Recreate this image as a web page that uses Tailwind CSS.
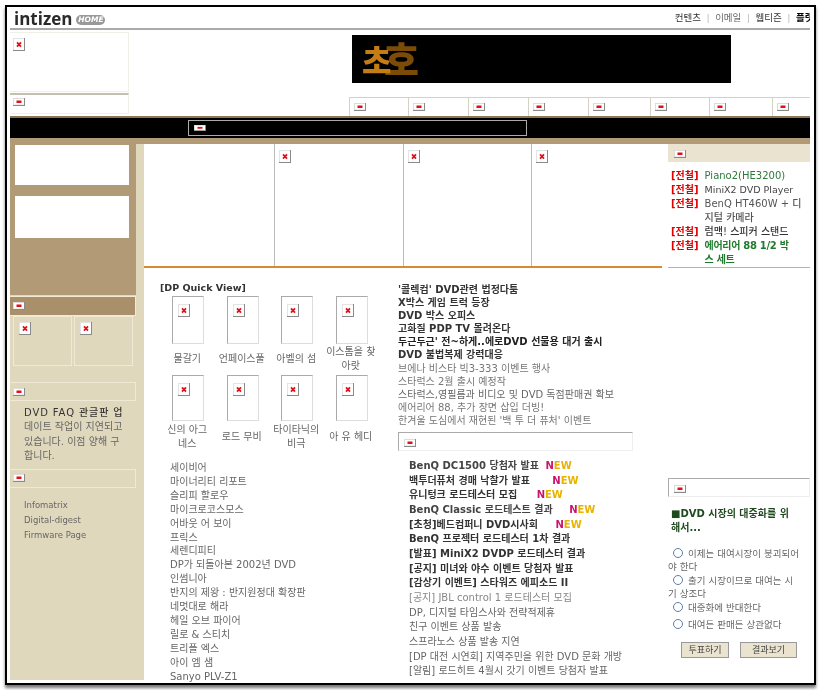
<!DOCTYPE html>
<html lang="ko">
<head>
  <meta charset="UTF-8">
  <title>intizen DP</title>
  <script src="https://cdn.jsdelivr.net/npm/@tailwindcss/browser@4"></script>
</head>
<body class="bg-white">
  <!-- broken image marks -->
  <svg class="hidden">
    <symbol id="broken" viewBox="0 0 12 12" preserveAspectRatio="none">
      <rect x="0" y="0" width="12" height="12" fill="#8a8a8a"/>
      <rect x="0" y="0" width="11" height="11" fill="#e4e4e4"/>
      <rect x="1" y="1" width="10" height="10" fill="#fff"/>
      <path d="M4 4l4 4M8 4l-4 4" stroke="#e0101a" stroke-width="1.8"/>
    </symbol>
    <symbol id="flat" viewBox="0 0 12 8" preserveAspectRatio="none">
      <rect x="0" y="0" width="12" height="8" fill="#8a8a8a"/>
      <rect x="0" y="0" width="11" height="7" fill="#dcdcdc"/>
      <rect x="1" y="1" width="10" height="5.5" fill="#fff"/>
      <rect x="3.5" y="2.5" width="5" height="2.5" fill="#e0101a"/>
    </symbol>
  </svg>

  <div class="w-[820px] h-[690px] pt-[5px] pl-[5px] overflow-hidden font-['DejaVu_Sans','Noto_Sans_CJK_KR',sans-serif] text-[10px] text-[#555] blur-[0.35px]">
    <div class="w-[811px] h-[680px] border-2 border-black p-[3px] pb-0 pr-[4px] overflow-hidden shadow-[0_3px_3px_#777]">

      <!-- Top bar -->
      <header class="flex justify-between items-start h-[18px] border-b-2 border-[#aaa] box-content">
        <div class="flex items-center pl-1 -mt-[2px]">
          <span class="font-['Open_Sans',sans-serif] font-bold text-[17px] leading-[22px] text-[#2a2a2a]">intizen</span>
          <span class="ml-[4px] mt-[2px] w-[29px] h-[10px] rounded-full bg-[#999] text-white italic font-bold text-[7.5px] leading-[10px] text-center">HOME</span>
        </div>
        <nav class="flex items-center gap-[5.5px] pt-[2px] text-[9.5px] leading-[12px] text-[#333] whitespace-nowrap">
          <a>컨텐츠</a><span class="text-[#bbb]">|</span><a class="text-[#666]">이메일</a><span class="text-[#bbb]">|</span><a>웹티즌</a><span class="text-[#bbb]">|</span><a class="font-bold text-black w-[14px] overflow-hidden">플랫</a>
        </nav>
      </header>

      <!-- Banner area -->
      <div class="flex h-[86px] pt-[2px]">
        <div class="w-[119px] shrink-0">
          <div class="h-[60px] border border-[#f1f0e6] border-l-0 pl-[3px] pt-[5px]"><svg class="w-[12px] h-[13px]"><use href="#broken"/></svg></div>
          <div class="h-[21px] mt-[1px] border-t-2 border-[#c4c0b0] border-r border-r-[#f1f0e6] border-b border-b-[#f1f0e6] pl-[3px] pt-[3px]"><svg class="w-[12px] h-[8px] block"><use href="#flat"/></svg></div>
        </div>
        <div class="flex-1 pl-[223px]">
          <div class="relative mt-[3px] w-[379px] h-[48px] bg-black">
            <span class="absolute left-[32px] top-[-1px] font-['Noto_Sans_CJK_KR',sans-serif] font-black text-[38px] leading-[48px] text-[#7a4c08]">호</span>
            <span class="absolute left-[10px] top-[5px] font-['Noto_Sans_CJK_KR',sans-serif] font-black text-[32px] leading-[38px] text-[#c47c14]">초</span>
          </div>
          <div class="mt-[14px] flex h-[19px] -ml-[3px]">
            <div class="w-[60px] border border-[#d5d2c4] border-b-0 pl-[4px] pt-[5px]"><svg class="w-[12px] h-[8px] block"><use href="#flat"/></svg></div>
            <div class="w-[60px] border border-[#d5d2c4] border-b-0 border-l-0 pl-[4px] pt-[5px]"><svg class="w-[12px] h-[8px] block"><use href="#flat"/></svg></div>
            <div class="w-[60px] border border-[#d5d2c4] border-b-0 border-l-0 pl-[4px] pt-[5px]"><svg class="w-[12px] h-[8px] block"><use href="#flat"/></svg></div>
            <div class="w-[60px] border border-[#d5d2c4] border-b-0 border-l-0 pl-[4px] pt-[5px]"><svg class="w-[12px] h-[8px] block"><use href="#flat"/></svg></div>
            <div class="w-[62px] border border-[#d5d2c4] border-b-0 border-l-0 pl-[4px] pt-[5px]"><svg class="w-[12px] h-[8px] block"><use href="#flat"/></svg></div>
            <div class="w-[59px] border border-[#d5d2c4] border-b-0 border-l-0 pl-[4px] pt-[5px]"><svg class="w-[12px] h-[8px] block"><use href="#flat"/></svg></div>
            <div class="w-[63px] border border-[#d5d2c4] border-b-0 border-l-0 pl-[4px] pt-[5px]"><svg class="w-[12px] h-[8px] block"><use href="#flat"/></svg></div>
            <div class="w-[37px] border-t border-[#d5d2c4] pl-[4px] pt-[5px]"><svg class="w-[12px] h-[8px] block"><use href="#flat"/></svg></div>
          </div>
        </div>
      </div>

      <!-- Black menu bar -->
      <div class="h-[22px] border-t-2 border-[#8c7657] bg-black pt-[2px] pl-[178px]">
        <div class="w-[339px] h-[16px] border border-[#aaa] pl-[5px] pt-[4px]"><svg class="w-[12px] h-[6px] block"><use href="#flat"/></svg></div>
      </div>
      <div class="h-[6px] bg-[#b39a76]"></div>

      <!-- Three columns -->
      <div class="flex h-[536px]">

        <!-- Left column -->
        <aside class="w-[134px] shrink-0 bg-[#e0d8bd]">
          <div class="w-[126px] h-[151px] bg-[#b39a76] pl-[5px] pt-[1px]">
            <div class="w-[114px] h-[40px] bg-white"></div>
            <div class="w-[114px] h-[42px] mt-[11px] bg-white"></div>
          </div>
          <div class="w-[126px] h-[20px] mt-[1px] bg-[#a98f6a] border border-[#efe9d6] border-l-0 pl-[3px] pt-[5px]"><svg class="w-[12px] h-[8px] block"><use href="#flat"/></svg></div>
          <div class="flex gap-[2px] pl-[3px]">
            <div class="w-[59px] h-[50px] border border-[#efe9d6] pl-[5px] pt-[5px]"><svg class="w-[12px] h-[13px] block"><use href="#broken"/></svg></div>
            <div class="w-[59px] h-[50px] border border-[#efe9d6] pl-[5px] pt-[5px]"><svg class="w-[12px] h-[13px] block"><use href="#broken"/></svg></div>
          </div>
          <div class="w-[126px] h-[19px] mt-[16px] border border-[#efe9d6] border-l-0 pl-[3px] pt-[5px]"><svg class="w-[12px] h-[8px] block"><use href="#flat"/></svg></div>
          <p class="ml-[14px] mt-[5px] leading-[14.4px] text-[#666] whitespace-nowrap"><b class="text-[#333] tracking-[0.9px] font-medium">DVD FAQ 관글판 업</b><br>데이트 작업이 지연되고<br>있습니다. 이점 양해 구<br>합니다.</p>
          <div class="w-[126px] h-[19px] mt-[5px] border border-[#efe9d6] border-l-0 pl-[3px] pt-[4px]"><svg class="w-[12px] h-[8px] block"><use href="#flat"/></svg></div>
          <ul class="pl-[14px] mt-[10px] text-[8.5px] text-[#666]">
            <li class="leading-[15px]">Infomatrix</li>
            <li class="leading-[15px]">Digital-digest</li>
            <li class="leading-[15px]">Firmware Page</li>
          </ul>
        </aside>

        <!-- Center column -->
        <main class="w-[518px] shrink-0 bg-white">
          <div class="flex h-[124px] border-b-2 border-[#d98a2e]">
            <div class="w-[131px] border-r border-[#bbb]"></div>
            <div class="w-[129px] border-r border-[#bbb] pl-[4px] pt-[6px]"><svg class="w-[12px] h-[13px] block"><use href="#broken"/></svg></div>
            <div class="w-[128px] border-r border-[#bbb] pl-[4px] pt-[6px]"><svg class="w-[12px] h-[13px] block"><use href="#broken"/></svg></div>
            <div class="flex-1 pl-[4px] pt-[6px]"><svg class="w-[12px] h-[13px] block"><use href="#broken"/></svg></div>
          </div>

          <div class="flex pt-[13px]">
            <!-- Quick view -->
            <section class="w-[254px] shrink-0 pl-[16px]">
              <h2 class="font-bold text-[#333] text-[9.5px] leading-[13px]">[DP Quick View]</h2>
              <div class="grid grid-cols-[repeat(4,54.5px)] w-[218px] text-center text-[#666] leading-[14px] mt-[2px]">
                <div class="h-[79px]"><div class="w-[32px] h-[48px] ml-[12px] border border-[#ddd] border-t-[#aaa] border-l-[#aaa] pl-[5px] pt-[7px]"><svg class="w-[12px] h-[13px] block"><use href="#broken"/></svg></div><p class="h-[30px] flex items-center justify-center break-keep">물갈기</p></div>
                <div class="h-[79px]"><div class="w-[32px] h-[48px] ml-[12px] border border-[#ddd] border-t-[#aaa] border-l-[#aaa] pl-[5px] pt-[7px]"><svg class="w-[12px] h-[13px] block"><use href="#broken"/></svg></div><p class="h-[30px] flex items-center justify-center break-keep">언페이스풀</p></div>
                <div class="h-[79px]"><div class="w-[32px] h-[48px] ml-[12px] border border-[#ddd] border-t-[#aaa] border-l-[#aaa] pl-[5px] pt-[7px]"><svg class="w-[12px] h-[13px] block"><use href="#broken"/></svg></div><p class="h-[30px] flex items-center justify-center break-keep">아벨의 섬</p></div>
                <div class="h-[79px]"><div class="w-[32px] h-[48px] ml-[12px] border border-[#ddd] border-t-[#aaa] border-l-[#aaa] pl-[5px] pt-[7px]"><svg class="w-[12px] h-[13px] block"><use href="#broken"/></svg></div><p class="h-[30px] flex items-center justify-center">이스톰을 찾<br>아랏</p></div>
                <div class="h-[78px]"><div class="w-[32px] h-[46px] ml-[12px] border border-[#ddd] border-t-[#aaa] border-l-[#aaa] pl-[5px] pt-[7px]"><svg class="w-[12px] h-[13px] block"><use href="#broken"/></svg></div><p class="h-[32px] flex items-center justify-center">신의 아그<br>네스</p></div>
                <div class="h-[78px]"><div class="w-[32px] h-[46px] ml-[12px] border border-[#ddd] border-t-[#aaa] border-l-[#aaa] pl-[5px] pt-[7px]"><svg class="w-[12px] h-[13px] block"><use href="#broken"/></svg></div><p class="h-[32px] flex items-center justify-center">로드 무비</p></div>
                <div class="h-[78px]"><div class="w-[32px] h-[46px] ml-[12px] border border-[#ddd] border-t-[#aaa] border-l-[#aaa] pl-[5px] pt-[7px]"><svg class="w-[12px] h-[13px] block"><use href="#broken"/></svg></div><p class="h-[32px] flex items-center justify-center">타이타닉의<br>비극</p></div>
                <div class="h-[78px]"><div class="w-[32px] h-[46px] ml-[12px] border border-[#ddd] border-t-[#aaa] border-l-[#aaa] pl-[5px] pt-[7px]"><svg class="w-[12px] h-[13px] block"><use href="#broken"/></svg></div><p class="h-[32px] flex items-center justify-center">아 유 헤디</p></div>
              </div>
              <ul class="pl-[10px] mt-[8px] leading-[13.9px] text-[#666] whitespace-nowrap">
                <li>세이비어</li>
                <li>마이너리티 리포트</li>
                <li>슬리피 할로우</li>
                <li>마이크로코스모스</li>
                <li>어바웃 어 보이</li>
                <li>프릭스</li>
                <li>세렌디피티</li>
                <li>DP가 되돌아본 2002년 DVD</li>
                <li>인썸니아</li>
                <li>반지의 제왕 : 반지원정대 확장판</li>
                <li>네멋대로 해라</li>
                <li>헤일 오브 파이어</li>
                <li>릴로 &amp; 스티치</li>
                <li>트리플 엑스</li>
                <li>아이 엠 샘</li>
                <li>Sanyo PLV-Z1</li>
              </ul>
            </section>

            <!-- News -->
            <section class="flex-1 whitespace-nowrap">
              <ul class="leading-[13.1px] pt-[2px]">
                <li class="font-bold text-[#333]">'콜렉컴' DVD관련 법정다툼</li>
                <li class="font-bold text-[#333]">X박스 게임 트럭 등장</li>
                <li class="font-bold text-[#333]">DVD 박스 오피스</li>
                <li class="font-bold text-[#333]">고화질 PDP TV 몰려온다</li>
                <li class="font-bold text-[#222]">두근두근' 전~하게..에로DVD 선물용 대거 출시</li>
                <li class="font-bold text-[#333]">DVD 불법복제 강력대응</li>
                <li class="text-[#777]">브에나 비스타 빅3-333 이벤트 행사</li>
                <li class="text-[#777]">스타럭스 2월 출시 예정작</li>
                <li class="text-[#666]">스타럭스,영필름과 비디오 및 DVD 독점판매권 확보</li>
                <li class="text-[#777]">에어리어 88, 추가 장면 삽입 더빙!</li>
                <li class="text-[#777]">한겨울 도심에서 재현된 '백 투 더 퓨처' 이벤트</li>
              </ul>
              <div class="w-[235px] h-[19px] mt-[5px] border border-[#eee] border-t-[#aaa] border-l-[#aaa] pl-[5px] pt-[6px]"><svg class="w-[12px] h-[8px] block"><use href="#flat"/></svg></div>
              <ul class="pl-[11px] mt-[8px] leading-[14.65px]">
                <li class="font-bold text-[#444]">BenQ DC1500 당첨자 발표 <span class="ml-[3px] font-black"><span class="text-[#c8146e]">N</span><span class="text-[#e8b400]">EW</span></span></li>
                <li class="font-bold text-[#333]">백투더퓨처 경매 낙찰가 발표 <span class="ml-[19px] font-black"><span class="text-[#c8146e]">N</span><span class="text-[#e8b400]">EW</span></span></li>
                <li class="font-bold text-[#333]">유니텅크 로드테스터 모집 <span class="ml-[16px] font-black"><span class="text-[#c8146e]">N</span><span class="text-[#e8b400]">EW</span></span></li>
                <li class="font-bold text-[#444]">BenQ Classic 로드테스트 결과 <span class="ml-[13px] font-black"><span class="text-[#c8146e]">N</span><span class="text-[#e8b400]">EW</span></span></li>
                <li class="font-bold text-[#333]">[초청]베드컴퍼니 DVD시사회 <span class="ml-[14px] font-black"><span class="text-[#c8146e]">N</span><span class="text-[#e8b400]">EW</span></span></li>
                <li class="font-bold text-[#333]">BenQ 프로젝터 로드테스터 1차 결과</li>
                <li class="font-bold text-[#333]">[발표] MiniX2 DVDP 로드테스터 결과</li>
                <li class="font-bold text-[#333]">[공지] 미녀와 야수 이벤트 당첨자 발표</li>
                <li class="font-bold text-[#333]">[감상기 이벤트] 스타워즈 에피소드 II</li>
                <li class="text-[#888]">[공지] JBL control 1 로드테스터 모집</li>
                <li class="text-[#666]">DP, 디지털 타임스사와 전략적제휴</li>
                <li class="text-[#666]">친구 이벤트 상품 발송</li>
                <li class="text-[#666]">스프라노스 상품 발송 지연</li>
                <li class="text-[#666]">[DP 대전 시연회] 지역주민을 위한 DVD 문화 개방</li>
                <li class="text-[#666]">[알림] 로드히트 4월시 갓기 이벤트 당첨자 발표</li>
              </ul>
            </section>
          </div>
        </main>

        <!-- Right column -->
        <aside class="flex-1 pl-[6px]">
          <div class="h-[124px] border-b border-[#bbb4a0]">
            <div class="h-[18px] bg-[#e9e3cf] pl-[6px] pt-[6px]"><svg class="w-[12px] h-[8px] block"><use href="#flat"/></svg></div>
            <ul class="mt-[7px] leading-[14px] pl-[3px] whitespace-nowrap">
              <li class="flex gap-[6px]"><b class="shrink-0 text-[#e00000]">[전철]</b><span class="font-medium text-[#2d7a3a]">Piano2(HE3200)</span></li>
              <li class="flex gap-[6px]"><b class="shrink-0 text-[#e00000]">[전철]</b><span class="font-medium text-[#444] text-[9.5px]">MiniX2 DVD Player</span></li>
              <li class="flex gap-[6px]"><b class="shrink-0 text-[#e00000]">[전철]</b><span class="font-medium text-[#555]">BenQ HT460W + 디<br>지털 카메라</span></li>
              <li class="flex gap-[6px]"><b class="shrink-0 text-[#e00000]">[전철]</b><span class="font-medium text-[#333]">럼맥! 스피커 스탠드</span></li>
              <li class="flex gap-[6px]"><b class="shrink-0 text-[#e00000]">[전철]</b><span class="font-bold text-[#1f7a2d] tracking-[-0.3px]">에어리어 88 1/2 박<br>스 세트</span></li>
            </ul>
          </div>

          <div class="mt-[210px] h-[19px] border border-[#eee] border-t-[#aaa] border-l-[#aaa] pl-[5px] pt-[6px]"><svg class="w-[12px] h-[8px] block"><use href="#flat"/></svg></div>
          <p class="mt-[10px] pl-[3px] font-bold text-[#1e4a1e] leading-[14px] whitespace-nowrap">■DVD 시장의 대중화를 위<br>해서...</p>
          <ul class="mt-[12px] leading-[13px] text-[9.5px] text-[#666] whitespace-nowrap">
            <li class="mb-[1px]"><span class="inline-block w-[10px] h-[10px] ml-[5px] mr-[2px] rounded-full border border-[#5c7ca8] align-[-1px]"></span> 이제는 대여시장이 붕괴되어<br>야 한다</li>
            <li class="mb-[1px]"><span class="inline-block w-[10px] h-[10px] ml-[5px] mr-[2px] rounded-full border border-[#5c7ca8] align-[-1px]"></span> 출기 시장이므로 대여는 시<br>기 상조다</li>
            <li class="mb-[4px]"><span class="inline-block w-[10px] h-[10px] ml-[5px] mr-[2px] rounded-full border border-[#5c7ca8] align-[-1px]"></span> 대중화에 반대한다</li>
            <li><span class="inline-block w-[10px] h-[10px] ml-[5px] mr-[2px] rounded-full border border-[#5c7ca8] align-[-1px]"></span> 대여든 판매든 상관없다</li>
          </ul>
          <div class="flex gap-[11px] mt-[11px] pl-[13px]">
            <button class="w-[48px] h-[16px] bg-[#e9e3cf] border border-[#999] text-[#444] text-[9px] leading-[14px]">투표하기</button>
            <button class="w-[57px] h-[16px] bg-[#e9e3cf] border border-[#999] text-[#444] text-[9px] leading-[14px]">결과보기</button>
          </div>
        </aside>
      </div>
    </div>
  </div>
</body>
</html>
